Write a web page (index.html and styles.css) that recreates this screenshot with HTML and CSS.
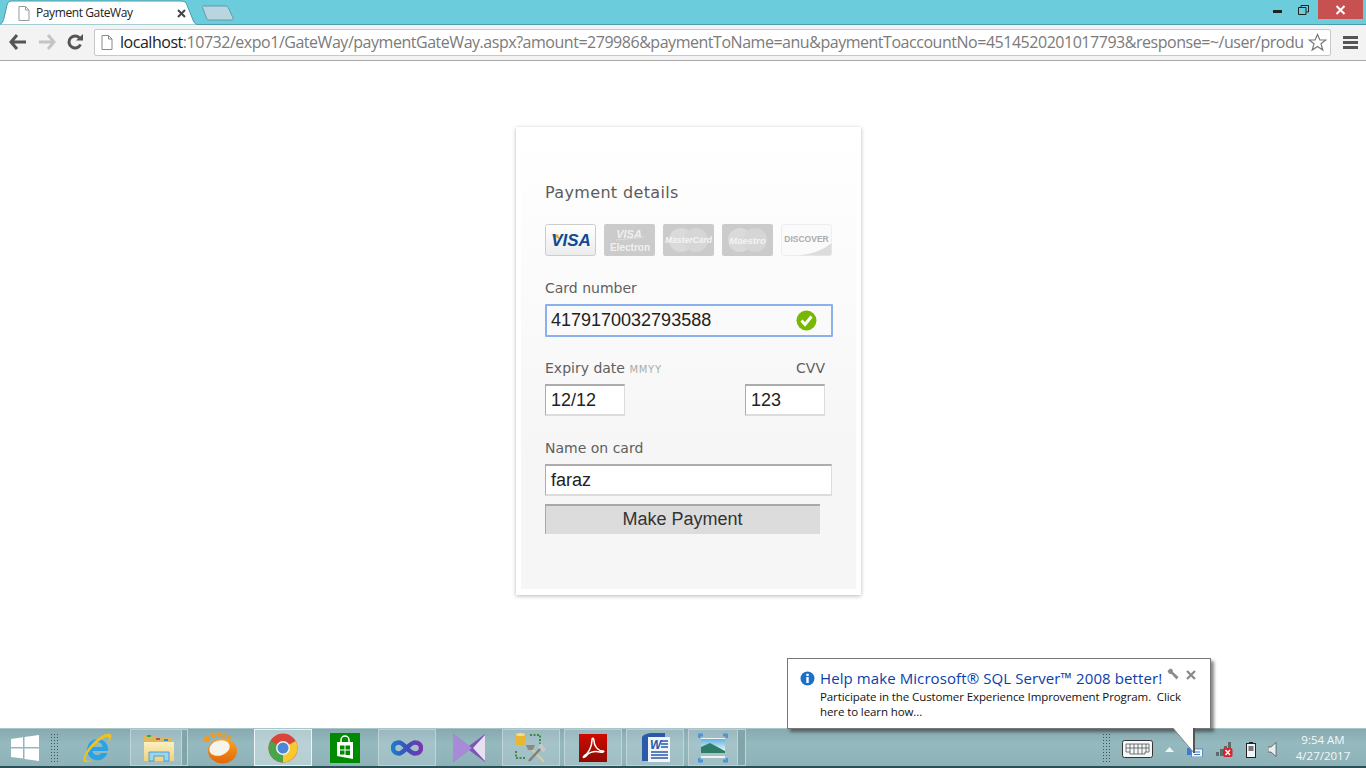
FILE: index.html
```html
<!DOCTYPE html>
<html lang="en">
<head>
<meta charset="utf-8">
<title>Payment GateWay</title>
<link rel="stylesheet" href="styles.css">
</head>
<body>
<div class="screen">
  <header class="tabstrip">
    <div class="tab">
      <svg class="tab-shape" width="208" height="25" viewBox="0 0 208 25"><path d="M0 25 C6 25 7 22 8 18 L11 5 C12 2 13 1 16 1 L185 1 C188 1 190 2 191 5 L197 20 C198 23 200 25 204 25 Z" fill="#fff" stroke="#4f9aa8"/></svg>
      <svg class="doc" width="12" height="15" viewBox="0 0 12 15"><path d="M1 .5H7.500L11 4V14.500H1Z" fill="#fff" stroke="#999"/><path d="M7.500 .5V4H11" fill="none" stroke="#999"/></svg>
      <span class="tab-title">Payment GateWay</span>
      <svg class="tab-close" width="9" height="9" viewBox="0 0 9 9"><path d="M1 1L8 8M8 1L1 8" stroke="#444" stroke-width="2"/></svg>
    </div>
    <svg class="newtab" width="32" height="16" viewBox="0 0 32 16"><path d="M1 1H24C25 1 26 2 26.500 3L31 13C31.500 14.500 31 15 29 15H7C5.500 15 5 14.500 4.500 13L.5 2.500C.3 1.500.5 1 1 1Z" fill="#b9d6e0" stroke="#5d9dab"/></svg>
    <div class="winctl">
      <span class="win-min"></span>
      <svg class="win-max" width="11" height="10" viewBox="0 0 11 10"><path d="M3 2V.5H10.500V7H8.500M.5 2.500H8V9.500H.5Z" fill="none" stroke="#222"/></svg>
      <span class="win-close"><svg width="11" height="10" viewBox="0 0 11 10"><path d="M1.500 1L9.500 9M9.500 1L1.500 9" stroke="#fff" stroke-width="2"/></svg></span>
    </div>
  </header>

  <nav class="toolbar">
    <svg class="navbtn" width="18" height="16" viewBox="0 0 18 16"><path d="M8 1L2 8L8 15M2 8H17" fill="none" stroke="#555" stroke-width="3"/></svg>
    <svg class="navbtn" width="18" height="16" viewBox="0 0 18 16"><path d="M10 1L16 8L10 15M16 8H1" fill="none" stroke="#c4c4c4" stroke-width="3"/></svg>
    <svg class="navbtn" width="16" height="16" viewBox="0 0 16 16"><path d="M13.500 10.500A6 6 0 1 1 12.500 4" fill="none" stroke="#555" stroke-width="3"/><path d="M9 6.500H16V0Z" fill="#555"/></svg>
    <div class="omnibox">
      <svg class="doc omni-doc" width="12" height="15" viewBox="0 0 12 15"><path d="M1 .5H7.500L11 4V14.500H1Z" fill="#fff" stroke="#888"/><path d="M7.500 .5V4H11" fill="none" stroke="#888"/></svg>
      <div class="url"><b>localhost</b>:10732/expo1/GateWay/paymentGateWay.aspx?amount=279986&amp;paymentToName=anu&amp;paymentToaccountNo=4514520201017793&amp;response=~/user/produ</div>
      <svg class="star" width="19" height="19" viewBox="0 0 19 19"><path d="M9.500 1.500L11.900 7H17.800L13 10.800L14.800 17L9.500 13.400L4.200 17L6 10.800L1.200 7H7.100Z" fill="#fff" stroke="#777" stroke-width="1.200"/></svg>
    </div>
    <div class="menu"><i></i><i></i><i></i></div>
  </nav>

  <main class="page">
    <section class="card">
      <form class="panel">
        <h1 class="title">Payment details</h1>
        <div class="brands">
          <svg class="brand" width="51" height="32" viewBox="0 0 51 32"><defs><linearGradient id="vg" x1="0" y1="0" x2="0" y2="1"><stop offset="0" stop-color="#fff"/><stop offset="1" stop-color="#ececec"/></linearGradient></defs><rect x=".5" y=".5" width="50" height="31" rx="2" fill="url(#vg)" stroke="#ccc"/><path d="M6 10.500H13L15 15.500Z" fill="#f2ab1d"/><text x="26" y="22" class="t-visa">VISA</text></svg>
          <svg class="brand" width="51" height="32" viewBox="0 0 51 32"><rect width="51" height="32" rx="2" fill="#cbcbcb"/><text x="25" y="13.500" class="t-ve1">VISA</text><path d="M12 16Q25 15 40 13" fill="none" stroke="#ddd"/><text x="26" y="27" class="t-ve2">Electron</text></svg>
          <svg class="brand" width="51" height="32" viewBox="0 0 51 32"><rect width="51" height="32" rx="2" fill="#cbcbcb"/><circle cx="18" cy="16" r="12" fill="#dadada"/><circle cx="33" cy="16" r="12" fill="#d6d6d6"/><text x="25.500" y="19" class="t-mc">MasterCard</text></svg>
          <svg class="brand" width="51" height="32" viewBox="0 0 51 32"><rect width="51" height="32" rx="2" fill="#cbcbcb"/><circle cx="18" cy="16" r="12" fill="#dadada"/><circle cx="33" cy="16" r="12" fill="#d6d6d6"/><text x="25.500" y="19.500" class="t-ma">Maestro</text></svg>
          <svg class="brand" width="51" height="32" viewBox="0 0 51 32"><rect x=".5" y=".5" width="50" height="31" rx="2" fill="#fafafa" stroke="#eee"/><path d="M16 31.500Q38 30 50.500 19V29.500Q50.500 31.500 48 31.500Z" fill="#dcdcdc"/><text x="25.500" y="17.500" class="t-di">DISCOVER</text></svg>
        </div>
        <label class="lbl lbl-card">Card number</label>
        <div class="cardfield">
          <div class="field field-focus">4179170032793588</div>
          <svg class="check" width="21" height="21" viewBox="0 0 21 21"><circle cx="10.500" cy="10.500" r="10" fill="#76b900"/><path d="M5.500 10.500L9 14.500L15.500 6.500" fill="none" stroke="#fff" stroke-width="3"/></svg>
        </div>
        <div class="splitlabels">
          <label class="lbl">Expiry date <small class="hint">MMYY</small></label>
          <label class="lbl lbl-cvv">CVV</label>
        </div>
        <div class="splitfields">
          <div class="field field-small">12/12</div>
          <div class="field field-small">123</div>
        </div>
        <label class="lbl lbl-name">Name on card</label>
        <div class="field field-name">faraz</div>
        <div class="submit">Make Payment</div>
      </form>
    </section>
  </main>

  <aside class="balloon">
    <svg class="info" width="15" height="15" viewBox="0 0 15 15"><circle cx="7.500" cy="7.500" r="7" fill="#1c70c8"/><rect x="6.300" y="6" width="2.400" height="6" fill="#fff"/><rect x="6.300" y="2.800" width="2.400" height="2.200" fill="#fff"/></svg>
    <div class="balloon-text">
      <div class="balloon-title">Help make Microsoft® SQL Server™ 2008 better!</div>
      <div class="balloon-body">Participate in the Customer Experience Improvement Program.&nbsp; Click here to learn how...</div>
    </div>
    <svg class="wrench" width="12" height="12" viewBox="0 0 12 12"><path d="M0.500 3L3 .5L5.500 1.500L6 4L11.500 9L9.500 11.500L4.500 6L2 5.800Z" fill="#8c8c8c"/></svg>
    <svg class="bclose" width="10" height="10" viewBox="0 0 10 10"><path d="M1 1L9 9M9 1L1 9" stroke="#888" stroke-width="2.200"/></svg>
    <svg class="tail" width="24" height="26" viewBox="0 0 24 26"><path d="M0 0L21 25V0Z" fill="#fff"/><path d="M0 0L21 25" stroke="#888" fill="none"/><path d="M21 0V25" stroke="#555" stroke-width="2" fill="none"/></svg>
  </aside>

  <footer class="taskbar">
    <svg class="start" width="28" height="26" viewBox="0 0 28 26"><path d="M0 4L12 2.300V12H0ZM13.500 2L28 0V12H13.500ZM0 13.500H12V23.500L0 22ZM13.500 13.500H28V26L13.500 24Z" fill="#fff"/></svg>
    <div class="grip"></div>
    <div class="slot slot-first">
      <svg width="32" height="32" viewBox="0 0 32 32"><path d="M16.500 7A10.500 10.500 0 0 0 6 17.500A10.500 10.500 0 0 0 26.500 21H20.500A5 5 0 0 1 11.500 19H27A10.500 10.500 0 0 0 16.500 7ZM11.500 15A5 5 0 0 1 21.500 15Z" fill="#29a3e6"/><path d="M29 2C24 0 12 8 5 20C2 26 1 31 6 30C9 30 12 28 12 28C8 29 3 30 5 25C8 17 22 4 27 5C29 6 28 9 26 12C30 8 32 4 29 2Z" fill="#f1c21a"/></svg>
    </div>
    <div class="slot slot-on slot-stack">
      <svg width="32" height="30" viewBox="0 0 32 30"><defs><linearGradient id="fold" x1="0" y1="0" x2="0" y2="1"><stop offset="0" stop-color="#fbf0bf"/><stop offset="1" stop-color="#eed27c"/></linearGradient></defs><path d="M1 3H12L14 5H29V24H1Z" fill="#dcb95e"/><rect x="4" y="2" width="4" height="2" fill="#3aa655"/><rect x="13" y="5" width="4" height="2" fill="#c9503c"/><rect x="21" y="6" width="4" height="2" fill="#3a8ad0"/><rect x="1" y="9" width="30" height="19" fill="url(#fold)"/><path d="M6 28V19H26V28H21V23H11V28Z" fill="#9ad4f0" stroke="#3c8fc0" stroke-width=".8"/></svg>
    </div>
    <div class="slot">
      <svg width="34" height="32" viewBox="0 0 34 32"><defs><linearGradient id="gimp" x1="0" y1="0" x2="0" y2="1"><stop offset="0" stop-color="#f9a51e"/><stop offset="1" stop-color="#e2660a"/></linearGradient></defs><ellipse cx="18.500" cy="19" rx="14.500" ry="12.500" fill="url(#gimp)"/><ellipse cx="15.500" cy="16" rx="10.500" ry="7.500" fill="#f7f4ee" transform="rotate(-18 15.500 16)"/><circle cx="3" cy="7" r="3" fill="#f49a1f"/><circle cx="9" cy="3" r="2.500" fill="#f49a1f"/><circle cx="15" cy="2.500" r="2.200" fill="#f49a1f"/><circle cx="20" cy="3.500" r="2" fill="#f49a1f"/><circle cx="25" cy="5" r="2" fill="#f49a1f"/></svg>
    </div>
    <div class="slot slot-active">
      <svg width="30" height="30" viewBox="0 0 30 30"><circle cx="15" cy="15" r="14.500" fill="#d9453a"/><path d="M15 15L27.600 8A14.500 14.500 0 0 1 15 29.500Z" fill="#f6c92e"/><path d="M15 15L15 29.500A14.500 14.500 0 0 1 2.400 7.800Z" fill="#4aa54a"/><circle cx="15" cy="15" r="7" fill="#f2f2f2"/><circle cx="15" cy="15" r="5.500" fill="#4b87d6"/></svg>
    </div>
    <div class="slot">
      <svg width="30" height="30" viewBox="0 0 30 30"><rect width="30" height="30" fill="#008a00"/><path d="M7 9H23V26L7 23Z" fill="#fff"/><path d="M11 9V7A4 4 0 0 1 19 7V9" fill="none" stroke="#fff" stroke-width="1.500"/><path d="M10 12.500H14.500V16.500H10ZM15.500 12.500H20V16.500H15.500ZM10 17.500H14.500V21.500H10ZM15.500 17.500H20V22H15.500Z" fill="#008a00"/></svg>
    </div>
    <div class="slot slot-on">
      <svg width="32" height="18" viewBox="0 0 32 18"><defs><linearGradient id="inf" x1="0" y1="0" x2="1" y2="0"><stop offset="0" stop-color="#1e7bc8"/><stop offset=".5" stop-color="#3b4fb8"/><stop offset="1" stop-color="#7a36b0"/></linearGradient></defs><path d="M8 3.500C3 3.500 2 7 2 9C2 12.500 5 14.500 8 14.500C13 14.500 18 3.500 24 3.500C28 3.500 30 6 30 9C30 12 28 14.500 24 14.500C18 14.500 13 3.500 8 3.500Z" fill="none" stroke="url(#inf)" stroke-width="4.500"/></svg>
    </div>
    <div class="slot">
      <svg width="34" height="30" viewBox="0 0 34 30"><path d="M1 1L17 13L33 1V29L17 17L1 29Z" fill="#7d55b8"/><path d="M1 1L20 15L1 29Z" fill="#a98ad8"/><path d="M33 2V28L21 15Z" fill="#e7e0f0"/></svg>
    </div>
    <div class="slot slot-on">
      <svg width="32" height="32" viewBox="0 0 32 32"><rect x="1" y="2" width="9" height="11" rx="1" fill="#e8b631"/><ellipse cx="5.500" cy="2.500" rx="4.500" ry="1.500" fill="#f5dc8a"/><path d="M15 3H25V12M1 19V26H11" fill="none" stroke="#3c8a3c" stroke-width="2" stroke-dasharray="2 1.500"/><path d="M15 15L29 30" stroke="#d8c9a0" stroke-width="2.500"/><path d="M27 15L14 29" stroke="#7f7f7f" stroke-width="2.500"/><path d="M11 13H20L18 18H13Z" fill="#8a8a8a"/><path d="M26 11L31 18L28 20L23 15Z" fill="#c8c8c8"/></svg>
    </div>
    <div class="slot slot-on">
      <svg width="28" height="28" viewBox="0 0 28 28"><defs><linearGradient id="pdf" x1="0" y1="0" x2="0" y2="1"><stop offset="0" stop-color="#d00b00"/><stop offset="1" stop-color="#8e0a00"/></linearGradient></defs><rect width="28" height="28" fill="url(#pdf)"/><path d="M5 22C9 20 13 13 13 6C13 3 15 4 15 7C15 12 19 17 24 17C26 17 24 19 21 18C16 17 11 18 8 21C6 24 3 24 5 22Z" fill="none" stroke="#fff" stroke-width="1.500"/></svg>
    </div>
    <div class="slot slot-on">
      <svg width="32" height="30" viewBox="0 0 32 30"><path d="M3 4C5 1 9 0 14 0H26V28H3Z" fill="#2a5aa8"/><rect x="9" y="4" width="22" height="25" fill="#f2f6fb"/><text x="11" y="16" class="t-word">W</text><path d="M22 8H29M22 11H29M22 14H29M12 19H29M12 22H29M12 25H29" stroke="#2a5aa8" stroke-width="1.500"/></svg>
    </div>
    <div class="slot slot-on slot-stack2">
      <svg class="photo" width="30" height="30" viewBox="0 0 30 30"><defs><linearGradient id="sky" x1="0" y1="0" x2="0" y2="1"><stop offset="0" stop-color="#5eb4e0"/><stop offset="1" stop-color="#d6ecf4"/></linearGradient></defs><rect x="3" y="5" width="24" height="20" fill="#eef2f2"/><path d="M3 6H27V16H3Z" fill="url(#sky)"/><path d="M3 14L12 10L27 18V21H3Z" fill="#2f7d68"/><path d="M3 20H27V23H3Z" fill="#a8c2c4"/><path d="M1 5V2H5M25 2H29V5M29 25V28H25M5 28H1V25" fill="none" stroke="#4a94d8" stroke-width="2.800"/></svg>
    </div>
    <div class="tray">
      <div class="grip grip-tray"></div>
      <svg class="kbd" width="31" height="18" viewBox="0 0 31 18"><rect x=".5" y=".5" width="30" height="17" rx="2" fill="#f4f8f8" stroke="#333"/><path d="M4 4H27V12H23V14H8V12H4ZM4 8H27M8 4V12M12 4V14M16 4V14M20 4V14M24 4V12" fill="none" stroke="#555" stroke-width=".8"/></svg>
      <svg class="uparrow" width="9" height="5" viewBox="0 0 9 5"><path d="M4.500 0L9 5H0Z" fill="#eef3f3"/></svg>
      <svg class="net" width="16" height="12" viewBox="0 0 16 12"><rect x="0" y="3" width="5" height="7" fill="#3a7bd5"/><rect x="4.500" y="4" width="11" height="8" fill="#eef6fb" stroke="#4a7fb5" stroke-width=".8"/><path d="M7 7H13M7 9.500H13" stroke="#4a7fb5"/></svg>
      <svg class="signal" width="17" height="15" viewBox="0 0 17 15"><path d="M0 10H3V14H0ZM4 7H7V14H4ZM8 4H11V14H8ZM12 0H15V8H12Z" fill="#5b6b6e"/><rect x="7" y="6" width="9.500" height="9" rx="2" fill="#d8232a"/><path d="M9.500 8L14 13M14 8L9.500 13" stroke="#fff" stroke-width="1.500"/></svg>
      <svg class="batt" width="10" height="16" viewBox="0 0 10 16"><rect x=".5" y="1.500" width="9" height="14" fill="#f0f5f5" stroke="#222"/><rect x="3" y="0" width="4" height="2" fill="#222"/><rect x="2.500" y="4" width="5" height="5" fill="#777"/></svg>
      <svg class="spk" width="9" height="15" viewBox="0 0 9 15"><path d="M0 5H3L8 .5V14.500L3 10H0Z" fill="#e6eeee" stroke="#333" stroke-width=".6"/></svg>
      <div class="clock"><div>9:54 AM</div><div>4/27/2017</div></div>
    </div>
  </footer>
</div>
</body>
</html>
```
FILE: styles.css
```css
* { box-sizing: border-box; }
html, body { margin: 0; padding: 0; }
body { font-family: "Open Sans", "Noto Sans", sans-serif; background: #fff; }
svg { display: block; flex: none; }

.screen { position: relative; width: 1366px; height: 768px; overflow: hidden; display: flex; flex-direction: column; }

/* Browser tab strip */
.tabstrip { height: 25px; flex: none; background: #6bccdb; border-bottom: 1px solid #4f9aa8; display: flex; align-items: flex-start; position: relative; }
.tab { position: relative; width: 200px; height: 25px; display: flex; align-items: center; }
.tab-shape { position: absolute; left: -4px; top: 0; }
.doc { position: relative; }
.tab .doc { margin-left: 18px; margin-top: 1px; }
.tab-title { position: relative; margin-left: 6px; font-size: 12px; letter-spacing: -.4px; color: #222; width: 130px; white-space: nowrap; }
.tab-close { position: relative; margin-left: 11px; margin-top: 1px; }
.newtab { margin-top: 5px; margin-left: 2px; }
.winctl { margin-left: auto; display: flex; align-items: flex-start; }
.win-min { width: 9px; height: 3px; background: #222; margin-top: 10px; margin-right: 16px; }
.win-max { margin-top: 5px; margin-right: 9px; }
.win-close { width: 45px; height: 19px; background: #c75050; margin-right: 3px; display: flex; align-items: center; justify-content: center; }

/* Browser toolbar */
.toolbar { height: 36px; flex: none; background: #f3f3f3; border-bottom: 1px solid #a8a8a8; display: flex; align-items: center; padding-bottom: 1px; padding-left: 9px; }
.navbtn { margin-right: 11px; }
.omnibox { width: 1237px; height: 27px; background: #fff; border: 1px solid #c8c8c8; border-radius: 2px; display: flex; align-items: center; padding-left: 6px; }
.omni-doc { margin-right: 7px; }
.url { width: 1187px; overflow: hidden; white-space: nowrap; font-size: 16px; color: #7b7b7b; letter-spacing: -0.47px; }
.url b { font-weight: 400; color: #222; }
.star { margin-left: 1px; }
.menu { margin-left: 12px; width: 15px; display: flex; flex-direction: column; gap: 2px; }
.menu i { display: block; height: 3px; background: #555; }

/* Page */
.page { flex: 1; min-height: 0; background: #fff; padding-top: 66px; padding-left: 516px; }
.card { width: 345px; height: 468px; padding: 5px 5px 6px; background: #fff; box-shadow: 0 1px 4px rgba(0, 0, 0, .28); }
.panel { height: 100%; padding: 51px 0 0 24px; background: linear-gradient(#fff, #f6f6f6 70%); font-family: "DejaVu Sans", sans-serif; color: #555; }
.title { margin: 0; font-size: 16px; font-weight: 400; line-height: 20px; color: #5c5c5c; letter-spacing: .35px; }
.brands { display: flex; gap: 8px; margin-top: 21px; }
.brand text { text-anchor: middle; font-family: "Liberation Sans", sans-serif; font-weight: 700; }
.t-visa { font-size: 17px; font-style: italic; fill: #0f4a94; }
.t-ve1 { font-size: 11px; font-style: italic; fill: #f0f0f0; }
.t-ve2 { font-size: 10px; fill: #f0f0f0; }
.t-mc { font-size: 8.500px; font-style: italic; fill: #f4f4f4; }
.t-ma { font-size: 9.500px; font-style: italic; fill: #f4f4f4; }
.t-di { font-size: 8.500px; fill: #acacac; }
.lbl { display: block; font-size: 14px; line-height: 18px; color: #5f5f5f; }
.lbl-card { margin-top: 23px; }
.cardfield { position: relative; width: 288px; margin-top: 7px; }
.field { height: 32px; background: #fff; border-style: solid; border-width: 2px 1px 2px 1px; border-color: #acacac #dcdcdc #dcdcdc #acacac; font-family: "Liberation Sans", sans-serif; font-size: 18px; line-height: 28px; padding-left: 5px; color: #222; }
.field-focus { height: 33px; width: 288px; background: #fafafa; border-width: 2px; border-color: #8ab0ee; border-radius: 1px; line-height: 29px; padding-left: 4px; }
.check { position: absolute; right: 16px; top: 6px; }
.splitlabels { display: flex; justify-content: space-between; width: 280px; margin-top: 22px; }
.hint { font-size: 10px; color: #a5afa5; letter-spacing: .7px; }
.splitfields { display: flex; justify-content: space-between; width: 280px; margin-top: 5px; }
.field-small { width: 80px; }
.lbl-name { margin-top: 23px; }
.field-name { width: 287px; margin-top: 7px; }
.submit { width: 275px; height: 30px; margin-top: 8px; background: #dcdcdc; border-top: 2px solid #a8a8a8; border-left: 1px solid #a8a8a8; font-family: "Liberation Sans", sans-serif; font-size: 18px; line-height: 27px; text-align: center; color: #333; padding-right: 1px; }

/* Balloon notification */
.balloon { position: absolute; left: 787px; top: 658px; width: 424px; height: 71px; background: #fff; border: 1px solid #777; box-shadow: 3px 3px 3px rgba(40, 40, 40, .55); display: flex; padding: 11px 0 0 12px; z-index: 2; }
.info { margin-top: 1px; margin-right: 5px; }
.balloon-text { width: 372px; }
.balloon-title { font-size: 15px; line-height: 17px; color: #0b3ea8; white-space: nowrap; letter-spacing: .09px; }
.balloon-body { margin-top: 2px; font-size: 11.500px; line-height: 15px; color: #111; letter-spacing: -0.1px; }
.wrench { position: absolute; left: 379px; top: 9px; }
.bclose { position: absolute; left: 398px; top: 11px; }
.tail { position: absolute; left: 385px; top: 69px; }

/* Windows taskbar */
.taskbar { height: 40px; flex: none; background: linear-gradient(#86aab0, #94b9bf 40%, #8eb2b8); border-top: 1px solid #a9c5ca; border-bottom: 2px solid #2a5057; display: flex; align-items: center; position: relative; }
.start { margin-left: 11px; margin-right: 11px; }
.grip { width: 8px; height: 30px; background-image: radial-gradient(circle, #39575c 0.9px, transparent 1px); background-size: 3px 3px; }
.slot { width: 58px; height: 37px; margin-right: 4px; display: flex; align-items: center; justify-content: center; border: 1px solid transparent; position: relative; }
.slot-first { margin-left: 10px; }
.slot-on { background: rgba(255, 255, 255, .16); border-color: rgba(255, 255, 255, .32); }
.slot-active { background: rgba(255, 255, 255, .36); border-color: rgba(255, 255, 255, .75); }
.slot-stack { box-shadow: inset -5px 0 0 rgba(130, 165, 170, 1), inset -6px 0 0 rgba(255, 255, 255, .32); }
.slot-stack2 { box-shadow: inset -7px 0 0 rgba(130, 165, 170, 1), inset -8px 0 0 rgba(255, 255, 255, .32); }
.slot-stack2 .photo { margin-right: 8px; }
.tray { position: absolute; left: 0; top: 0; width: 100%; height: 100%; pointer-events: none; }
.grip-tray, .kbd, .uparrow, .net, .signal, .batt, .spk { position: absolute; }
.grip-tray { left: 1102px; top: 4px; }
.kbd { left: 1122px; top: 11px; }
.uparrow { left: 1165px; top: 18px; }
.net { left: 1187px; top: 16px; }
.signal { left: 1216px; top: 13px; }
.batt { left: 1246px; top: 13px; }
.spk { left: 1268px; top: 13px; }
.clock { position: absolute; left: 1292px; top: 3px; width: 62px; text-align: center; color: #f4f8f8; font-size: 11.500px; line-height: 16px; }

/* Small SVG label for the Word icon */
.t-word { font-family: "Liberation Sans", sans-serif; font-size: 12px; font-weight: 700; font-style: italic; fill: #2a5aa8; }
```
